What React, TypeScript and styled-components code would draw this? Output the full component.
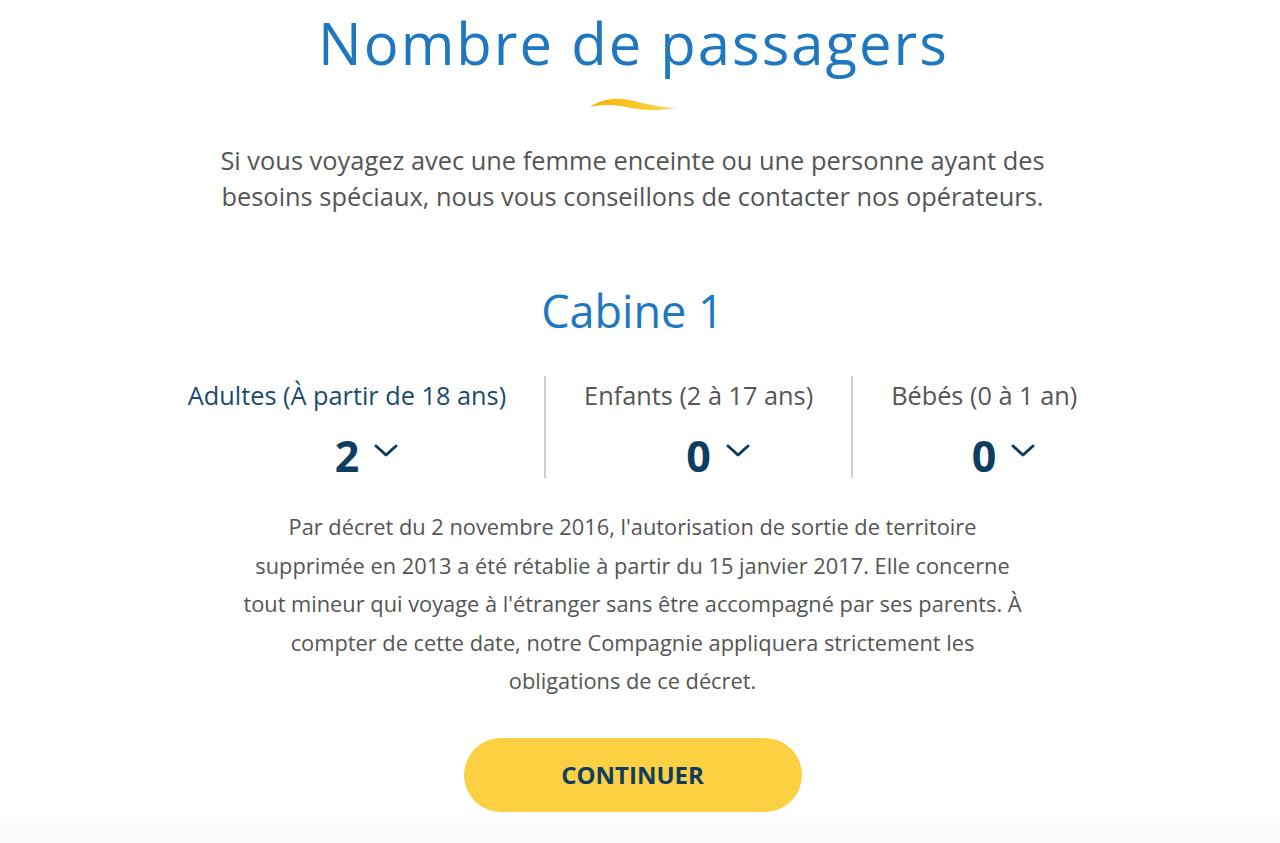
import React, { useState } from "react";
import styled, { createGlobalStyle } from "styled-components";

const GlobalStyle = createGlobalStyle`
  html, body {
    margin: 0;
    padding: 0;
    background: #ffffff;
  }
  body {
    font-family: "Open Sans", "Noto Sans", "Liberation Sans", sans-serif;
    color: #555555;
  }
`;

interface Passenger {
  label: string;
  value: number;
}

const initial: Passenger[] = [
  { label: "Adultes (À partir de 18 ans)", value: 2 },
  { label: "Enfants (2 à 17 ans)", value: 0 },
  { label: "Bébés (0 à 1 an)", value: 0 },
];

function Chevron() {
  return (
    <ChevronIcon viewBox="0 0 24 14" aria-hidden="true">
      <polyline points="2,2 12,11 22,2" />
    </ChevronIcon>
  );
}

function Wave() {
  return (
    <WaveIcon viewBox="0 0 88 14" aria-hidden="true">
      <defs>
        <linearGradient id="swoosh" x1="0" y1="0" x2="1" y2="0">
          <stop offset="0" stopColor="#f2b000" />
          <stop offset="0.45" stopColor="#f9c51f" />
          <stop offset="1" stopColor="#fcd65a" />
        </linearGradient>
      </defs>
      <path
        d="M1 10 C10 3, 24 1, 34 2 C50 4, 62 10, 87 11 C66 14, 52 13.5, 40 10.5 C28 7.5, 14 7, 1 10 Z"
        fill="url(#swoosh)"
      />
    </WaveIcon>
  );
}

export default function App() {
  const [passengers] = useState<Passenger[]>(initial);

  return (
    <>
      <GlobalStyle />
      <Page>
        <Title>Nombre de passagers</Title>
        <Wave />
        <Intro>
          Si vous voyagez avec une femme enceinte ou une personne ayant des
          besoins spéciaux, nous vous conseillons de contacter nos opérateurs.
        </Intro>

        <CabinTitle>Cabine 1</CabinTitle>

        <Counters>
          {passengers.map((p, i) => (
            <Counter key={p.label} $first={i === 0}>
              <CounterLabel $active={i === 0}>{p.label}</CounterLabel>
              <CounterValue>
                {p.value}
                <Chevron />
              </CounterValue>
            </Counter>
          ))}
        </Counters>

        <Notice>
          Par décret du 2 novembre 2016, l'autorisation de sortie de territoire
          supprimée en 2013 a été rétablie à partir du 15 janvier 2017. Elle
          concerne tout mineur qui voyage à l'étranger sans être accompagné par
          ses parents. À compter de cette date, notre Compagnie appliquera
          strictement les obligations de ce décret.
        </Notice>

        <ContinueButton type="button">CONTINUER</ContinueButton>
      </Page>
      <FooterStrip />
    </>
  );
}

const Page = styled.main`
  display: flex;
  flex-direction: column;
  align-items: center;
  padding: 4px 15px 0 0;
  height: 823px;
  box-sizing: border-box;
`;

const Title = styled.h1`
  margin: 0;
  padding-left: 2px;
  font-size: 58px;
  font-weight: 400;
  letter-spacing: 2px;
  line-height: 78px;
  color: #1e77bf;
`;

const WaveIcon = styled.svg`
  width: 88px;
  height: 14px;
  margin-top: 15px;
`;

const Intro = styled.p`
  margin: 32px 0 0;
  max-width: 840px;
  font-size: 25.4px;
  line-height: 35.5px;
  text-align: center;
  color: #555555;
`;

const CabinTitle = styled.h2`
  margin: 69px 0 0;
  font-size: 45px;
  font-weight: 400;
  line-height: 56px;
  color: #1e77bf;
`;

const Counters = styled.div`
  display: flex;
  justify-content: center;
  margin-top: 37px;
`;

const Counter = styled.div<{ $first: boolean }>`
  display: flex;
  flex-direction: column;
  align-items: center;
  padding: 0 38px;
  height: 102px;
  border-left: ${(p) => (p.$first ? "none" : "2px solid #cfcfcf")};
`;

const CounterLabel = styled.div<{ $active: boolean }>`
  font-size: 25.3px;
  line-height: 38px;
  color: ${(p) => (p.$active ? "#1b4a6c" : "#555555")};
`;

const CounterValue = styled.div`
  position: relative;
  margin-top: 22px;
  font-size: 43px;
  font-weight: 700;
  line-height: 40px;
  color: #0f3d5f;
`;

const ChevronIcon = styled.svg`
  position: absolute;
  left: calc(100% + 15px);
  top: 8px;
  width: 24px;
  height: 14px;
  fill: none;
  stroke: #0f3d5f;
  stroke-width: 3;
  stroke-linecap: round;
  stroke-linejoin: round;
`;

const Notice = styled.p`
  margin: 30px 0 0;
  max-width: 790px;
  font-size: 21.8px;
  line-height: 38.5px;
  text-align: center;
  color: #555555;
`;

const ContinueButton = styled.button`
  margin-top: 37px;
  width: 338px;
  height: 74px;
  border: none;
  border-radius: 37px;
  background: #fcd043;
  font-family: "Open Sans", "Noto Sans", "Liberation Sans", sans-serif;
  font-size: 24px;
  font-weight: 700;
  color: #0f3d5f;
  cursor: pointer;
`;

const FooterStrip = styled.div`
  height: 20px;
  background: #fafafa;
`;
